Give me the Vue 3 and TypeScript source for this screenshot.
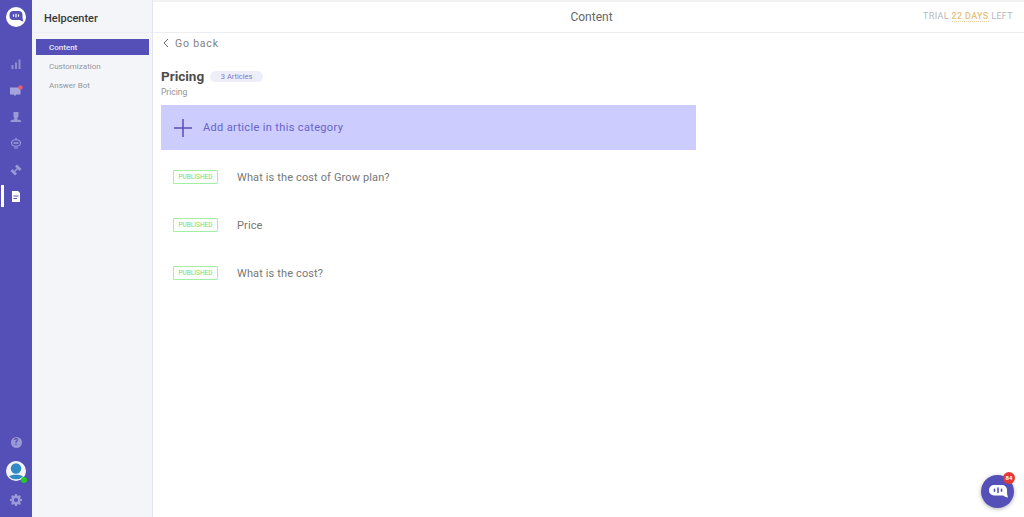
<script setup lang="ts">
const navItems = [
  { label: 'Content', active: true },
  { label: 'Customization', active: false },
  { label: 'Answer Bot', active: false }
]

const articles = ['What is the cost of Grow plan?', 'Price', 'What is the cost?']
</script>

<template>
  <div class="app">
    <aside class="rail">
      <div class="logo">
        <svg viewBox="0 0 20 20" width="20" height="20">
          <circle cx="10" cy="10" r="10" fill="#fff" />
          <path d="M7.500 4h5a4 4 0 0 1 4 4v2c0 1.500.3 3.200 1 4.500-1.500-.2-2.800-.8-3.800-1.500H7.500a4 4 0 0 1-4-4V8a4 4 0 0 1 4-4z" fill="#5450b8" />
          <path d="M7.500 7.800v1.400M10 7v3M12.500 7.800v1.400" stroke="#fff" stroke-width="1.200" stroke-linecap="round" />
        </svg>
      </div>

      <div class="rail-icons">
        <div class="rail-icon">
          <svg viewBox="0 0 12 12" width="12" height="12" fill="#8f8dd0">
            <rect x="1.500" y="7" width="2" height="4" />
            <rect x="5" y="4.500" width="2" height="6.500" />
            <rect x="8.500" y="1.500" width="2" height="9.500" />
          </svg>
        </div>
        <div class="rail-icon">
          <svg viewBox="0 0 14 12" width="14" height="12">
            <path d="M1 2.500h10.500v7H7.500L6 11 4.500 9.500H1z" fill="#a5a3dc" />
            <circle cx="11.500" cy="2.500" r="2.200" fill="#ef5a6a" />
          </svg>
        </div>
        <div class="rail-icon">
          <svg viewBox="0 0 12 12" width="12" height="12" fill="#9a98d6">
            <path d="M3.500 1h5v3.500c0 1.300-.6 2.300-1.300 2.700v1l3.800 1.300V11H.5V9.500l3.800-1.300v-1C3.600 6.700 3.500 5.500 3.500 4.500z" />
          </svg>
        </div>
        <div class="rail-icon">
          <svg viewBox="0 0 12 12" width="12" height="12" fill="none" stroke="#a5a3dc" stroke-width="1">
            <path d="M6 .8v2" />
            <rect x="1.500" y="2.800" width="9" height="6.400" rx="3.200" />
            <path d="M3.500 6h5" stroke-width="1.400" />
            <path d="M4 11h4" />
          </svg>
        </div>
        <div class="rail-icon">
          <svg viewBox="0 0 12 12" width="12" height="12" fill="#9a98d6">
            <path d="M7 .5l4.500 4.500-2 2-4.500-4.500zM2.500 5l4.500 4.500-2 2L.5 7z" />
            <path d="M4.500 7.500l3-3" stroke="#9a98d6" stroke-width="1.500" />
          </svg>
        </div>
        <div class="rail-icon is-active">
          <svg viewBox="0 0 10 11" width="10" height="11">
            <path d="M1 0h6l2 2v9H1z" fill="#fff" />
            <path d="M2.500 5h5M2.500 7.500h3.500" stroke="#5450b8" stroke-width="1" />
          </svg>
        </div>
      </div>

      <div class="rail-bottom">
        <div class="help">?</div>
        <div class="avatar">
          <svg viewBox="0 0 20 20" width="20" height="20">
            <circle cx="10" cy="10" r="10" fill="#f4f5f7" />
            <circle cx="10" cy="7.500" r="5.200" fill="#2f8ac6" />
            <path d="M3 15.500c2-2.500 12-2.500 14 0a10 10 0 0 1-14 0z" fill="#2f8ac6" />
          </svg>
          <span class="online"></span>
        </div>
        <svg class="gear" viewBox="0 0 12 12" width="12" height="12">
          <path fill-rule="evenodd" fill="#9a98d6" d="M5 0h2l.3 1.600 1 .4L9.700 1.100l1.300 1.300-1 1.300.4 1L12 5v2l-1.600.3-.4 1 1 1.400-1.300 1.300-1.400-1-1 .4L7 12H5l-.3-1.600-1-.4-1.400 1L1 9.700l1-1.400-.4-1L0 7V5l1.600-.3.4-1-1-1.300L2.300 1.100l1.400.9 1-.4zM6 4a2 2 0 1 0 0 4 2 2 0 0 0 0-4z" />
        </svg>
      </div>
    </aside>

    <nav class="sidebar">
      <div class="sidebar-title">Helpcenter</div>
      <div class="nav-list">
        <div v-for="item in navItems" :key="item.label" class="nav-item" :class="{ active: item.active }">
          {{ item.label }}
        </div>
      </div>
    </nav>

    <main class="main">
      <header class="topbar">
        <span class="topbar-title">Content</span>
        <span class="trial">TRIAL <span class="days">22 DAYS</span> LEFT</span>
      </header>

      <section class="content">
        <div class="back">
          <svg viewBox="0 0 6 10" width="6" height="10" fill="none" stroke="#666" stroke-width="1">
            <path d="M5 1L1 5l4 4" />
          </svg>
          <span>Go back</span>
        </div>

        <div class="heading">
          <h1>Pricing</h1>
          <span class="count">3 Articles</span>
        </div>
        <div class="subheading">Pricing</div>

        <div class="add-article">
          <svg viewBox="0 0 18 18" width="18" height="18" stroke="#5450b8" stroke-width="1.500">
            <path d="M9 0v18M0 9h18" />
          </svg>
          <span>Add article in this category</span>
        </div>

        <div class="articles">
          <div v-for="title in articles" :key="title" class="article">
            <span class="badge">PUBLISHED</span>
            <span class="article-title">{{ title }}</span>
          </div>
        </div>
      </section>
    </main>

    <div class="chat">
      <svg viewBox="0 0 20 18" width="20" height="18">
        <path d="M6 2h8a5 5 0 0 1 5 5v1c0 2 .3 4.500 1 6.500-2-.3-3.600-1-4.800-2H6a5 5 0 0 1-5-5V7a5 5 0 0 1 5-5z" fill="#fff" />
        <path d="M6.500 6.200v2M10 5v4.500M13.500 6.200v2" stroke="#5450b8" stroke-width="1.600" stroke-linecap="round" />
      </svg>
      <span class="chat-badge">84</span>
    </div>
  </div>
</template>

<style>
html,
body {
  margin: 0;
  background: #fff;
}
</style>

<style scoped>
.app {
  display: flex;
  height: 517px;
  width: 1024px;
  overflow: hidden;
  font-family: Roboto, "Liberation Sans", sans-serif;
}

.rail {
  width: 32px;
  flex-shrink: 0;
  background: #5450b8;
  display: flex;
  flex-direction: column;
  align-items: center;
  padding-top: 7px;
  box-sizing: border-box;
}

.logo {
  height: 20px;
}

.rail-icons {
  margin-top: 24px;
  width: 100%;
  display: flex;
  flex-direction: column;
}

.rail-icon {
  height: 26.4px;
  display: flex;
  align-items: center;
  justify-content: center;
  position: relative;
}

.rail-icon.is-active::before {
  content: '';
  position: absolute;
  left: 1px;
  top: 2px;
  bottom: 2px;
  width: 3px;
  background: #fff;
}

.rail-bottom {
  margin-top: auto;
  padding-bottom: 11px;
  display: flex;
  flex-direction: column;
  align-items: center;
}

.help {
  width: 11px;
  height: 11px;
  border-radius: 50%;
  background: #9a98d6;
  color: #5450b8;
  font-size: 9px;
  font-weight: 700;
  line-height: 11px;
  text-align: center;
}

.avatar {
  position: relative;
  width: 20px;
  height: 20px;
  margin-top: 13px;
  margin-bottom: 13px;
}

.online {
  position: absolute;
  right: -1px;
  bottom: -2px;
  width: 6px;
  height: 6px;
  border-radius: 50%;
  background: #22cc22;
}

.sidebar {
  width: 121px;
  flex-shrink: 0;
  background: #f3f5f8;
  border-right: 1px solid #e2e4ee;
  box-sizing: border-box;
}

.sidebar-title {
  height: 33px;
  box-sizing: border-box;
  border-bottom: 1px solid #eceef2;
  padding: 12px 0 0 12px;
  font-size: 11px;
  line-height: 14px;
  font-weight: 500;
  color: #3a3a3a;
}

.nav-list {
  padding: 6px 3px 0 4px;
  display: flex;
  flex-direction: column;
  gap: 3px;
}

.nav-item {
  height: 16px;
  line-height: 17px;
  padding-left: 13px;
  font-size: 8px;
  color: #96969e;
}

.nav-item.active {
  background: #5450b8;
  color: #e6e6f6;
  font-weight: 500;
}

.main {
  flex: 1;
  min-width: 0;
  display: flex;
  flex-direction: column;
}

.topbar {
  height: 33px;
  box-sizing: border-box;
  border-top: 2px solid #f3f3f5;
  border-bottom: 1px solid #eceef2;
  padding-left: 6px;
  display: flex;
  align-items: center;
  justify-content: center;
  position: relative;
}

.topbar-title {
  font-size: 12px;
  color: #666;
}

.trial {
  position: absolute;
  right: 11px;
  top: 8px;
  font-size: 9px;
  line-height: 12px;
  letter-spacing: 0.35px;
  color: #b8b8b8;
}

.days {
  color: #e6bf7a;
  font-weight: 500;
  border-bottom: 1px dotted #ecd3a4;
}

.content {
  padding: 0 0 0 8px;
}

.back {
  display: flex;
  align-items: center;
  gap: 6px;
  height: 14px;
  margin-top: 3px;
  padding-left: 2px;
  font-size: 10.5px;
  letter-spacing: 0.8px;
  color: #808080;
}

.heading {
  display: flex;
  align-items: center;
  gap: 6px;
  margin-top: 18px;
  height: 16px;
}

.heading h1 {
  margin: 0;
  font-size: 13.5px;
  font-weight: 700;
  color: #4d4d4d;
}

.count {
  width: 53px;
  height: 11px;
  border-radius: 6px;
  background: #eeeefb;
  color: #7c79cc;
  font-size: 7.5px;
  line-height: 11px;
  text-align: center;
}

.subheading {
  margin-top: 2px;
  height: 12px;
  font-size: 8.5px;
  line-height: 12px;
  color: #939393;
}

.add-article {
  margin-top: 7px;
  width: 535px;
  height: 45px;
  background: #ccccff;
  display: flex;
  align-items: center;
  gap: 11px;
  padding-left: 13px;
  box-sizing: border-box;
  color: #6764c8;
  font-size: 11px;
  letter-spacing: 0.35px;
}

.articles {
  display: flex;
  flex-direction: column;
  gap: 34px;
  margin-top: 20px;
  padding-left: 12px;
}

.article {
  display: flex;
  align-items: center;
  height: 14px;
}

.badge {
  width: 45px;
  height: 14px;
  box-sizing: border-box;
  border: 1px solid #a4eea4;
  border-radius: 1px;
  color: #6fdc6f;
  font-size: 6.5px;
  line-height: 12px;
  text-align: center;
}

.article-title {
  margin-left: 19px;
  font-size: 11px;
  letter-spacing: 0.13px;
  color: #777;
}

.chat {
  position: absolute;
  left: 981px;
  top: 475px;
  width: 33px;
  height: 33px;
  border-radius: 50%;
  background: #5450b8;
  box-shadow: 0 1px 4px rgba(0, 0, 0, 0.3);
  display: flex;
  align-items: center;
  justify-content: center;
}

.chat-badge {
  position: absolute;
  right: -1px;
  top: -3px;
  width: 12px;
  height: 12px;
  border-radius: 50%;
  background: #e53935;
  color: #fff;
  font-size: 6px;
  font-weight: 700;
  line-height: 12px;
  text-align: center;
}
</style>
